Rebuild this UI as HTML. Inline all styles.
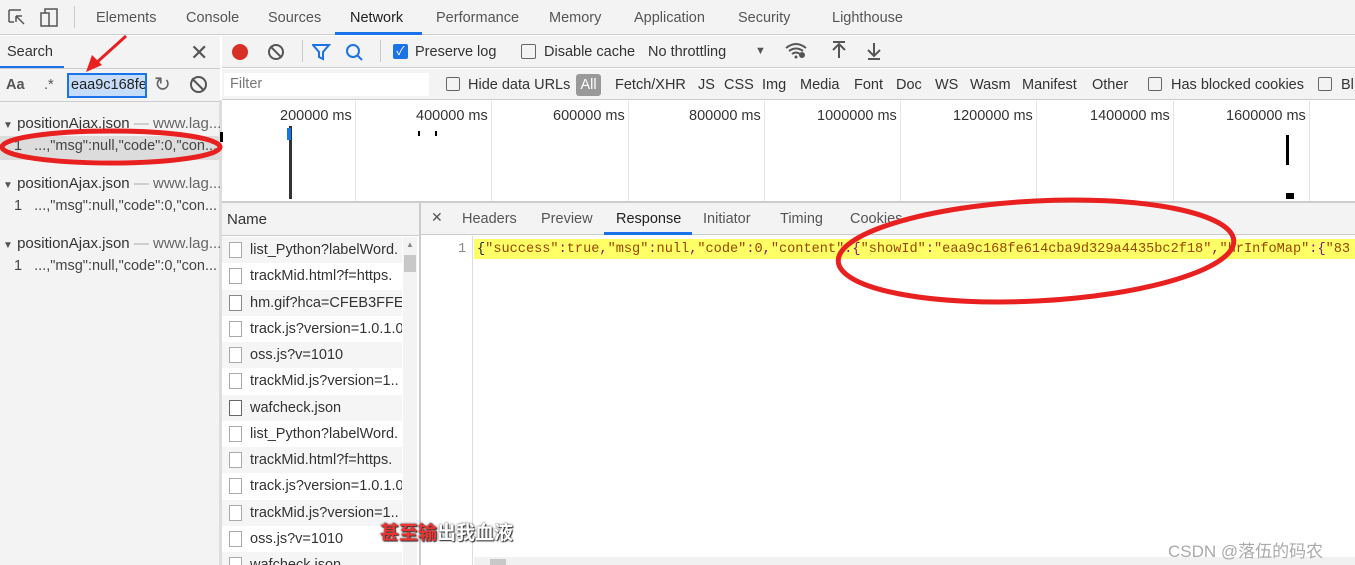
<!DOCTYPE html><html><head><meta charset="utf-8"><style>
*{box-sizing:border-box;margin:0;padding:0}
html,body{width:1355px;height:565px;overflow:hidden}
body{background:#fff;font-family:"Liberation Sans","Noto Sans CJK SC",sans-serif;font-size:14.5px;color:#333;position:relative}
.a{position:absolute;white-space:nowrap}
.f{position:absolute;white-space:nowrap;top:77px;font-size:14.5px}
.mono{font-family:"Liberation Mono",monospace;font-size:13.6px}
.row{position:absolute;left:222px;width:180px;height:26px;line-height:26px;padding-left:28px;white-space:nowrap;overflow:hidden}
.row i{position:absolute;left:7px;top:5px;width:13px;height:16px;border:1px solid #aaa;background:#fff}
</style></head><body>
<div class="a" style="left:0;top:0;width:1355px;height:35px;background:#f3f3f3;border-bottom:1px solid #ccc"></div>
<svg class="a" style="left:7px;top:8px" width="60" height="20"><path d="M2 2h12M2 2v12M2 14h5M9 8l8 8M9 8h6M9 8v6" stroke="#555" stroke-width="1.5" fill="none"/><rect x="34" y="5" width="8" height="13" stroke="#555" fill="none" stroke-width="1.5"/><path d="M38 5V1h12v17h-8" stroke="#555" fill="none" stroke-width="1.5"/></svg>
<div class="a" style="left:74px;top:6px;width:1px;height:22px;background:#ccc"></div>
<div class="a" style="top:10px;left:96px;color:#555">Elements</div>
<div class="a" style="top:10px;left:186px;color:#555">Console</div>
<div class="a" style="top:10px;left:268px;color:#555">Sources</div>
<div class="a" style="top:10px;left:350px;color:#222">Network</div>
<div class="a" style="top:32px;left:335px;width:87px;height:3px;background:#1a73e8"></div>
<div class="a" style="top:10px;left:436px;color:#555">Performance</div>
<div class="a" style="top:10px;left:549px;color:#555">Memory</div>
<div class="a" style="top:10px;left:634px;color:#555">Application</div>
<div class="a" style="top:10px;left:738px;color:#555">Security</div>
<div class="a" style="top:10px;left:832px;color:#555">Lighthouse</div>
<div class="a" style="left:0;top:36px;width:220px;height:66px;background:#f3f3f3;border-bottom:1px solid #ccc"></div>
<div class="a" style="left:7px;top:44px">Search</div>
<div class="a" style="left:0;top:66px;width:64px;height:2px;background:#1a73e8"></div>
<div class="a" style="left:190px;top:40px;font-size:22px;color:#555">✕</div>
<div class="a" style="left:0;top:68px;width:220px;height:1px;background:#ccc"></div>
<div class="a" style="left:6px;top:77px;font-weight:bold;color:#555">Aa</div>
<div class="a" style="left:44px;top:77px;color:#555">.*</div>
<div class="a" style="left:67px;top:73px;width:80px;height:25px;border:2px solid #1a73e8;background:#c6dcf8;padding-left:2px;line-height:20px;color:#222;overflow:hidden">eaa9c168fe</div>
<div class="a" style="left:154px;top:72px;font-size:20px;color:#666">↻</div>
<div class="a" style="left:190px;top:76px;width:17px;height:17px;border:2px solid #555;border-radius:50%"><div style="position:absolute;left:5px;top:-2px;width:2px;height:17px;background:#555;transform:rotate(-45deg)"></div></div>
<div class="a" style="left:0;top:102px;width:220px;height:463px;background:#f3f3f3"></div>
<div class="a" style="left:219px;top:100px;width:3px;height:465px;background:#ddd"></div>
<div class="a" style="left:0;top:136px;width:220px;height:24px;background:#dcdcdc"></div>
<div class="a" style="left:3px;top:115px;font-size:15px"><span style="font-size:10px;color:#555">▼</span> positionAjax.json <span style="color:#aaa">—</span> <span style="color:#666">www.lag...</span></div>
<div class="a" style="left:14px;top:138px;color:#444">1 &nbsp;&nbsp;...,"msg":null,"code":0,"con...</div>
<div class="a" style="left:3px;top:175px;font-size:15px"><span style="font-size:10px;color:#555">▼</span> positionAjax.json <span style="color:#aaa">—</span> <span style="color:#666">www.lag...</span></div>
<div class="a" style="left:14px;top:198px;color:#444">1 &nbsp;&nbsp;...,"msg":null,"code":0,"con...</div>
<div class="a" style="left:3px;top:235px;font-size:15px"><span style="font-size:10px;color:#555">▼</span> positionAjax.json <span style="color:#aaa">—</span> <span style="color:#666">www.lag...</span></div>
<div class="a" style="left:14px;top:258px;color:#444">1 &nbsp;&nbsp;...,"msg":null,"code":0,"con...</div>
<div class="a" style="left:222px;top:36px;width:1133px;height:32px;background:#f3f3f3;border-bottom:1px solid #ccc"></div>
<div class="a" style="left:232px;top:44px;width:16px;height:16px;border-radius:50%;background:#d93025"></div>
<div class="a" style="left:268px;top:44px;width:16px;height:16px;border:2px solid #555;border-radius:50%"><div style="position:absolute;left:5px;top:-2px;width:2px;height:16px;background:#555;transform:rotate(-45deg)"></div></div>
<div class="a" style="left:302px;top:40px;width:1px;height:22px;background:#ccc"></div>
<svg class="a" style="left:312px;top:43px" width="60" height="20"><path d="M1 2h16l-6 7v7l-4-2V9z" fill="none" stroke="#1a73e8" stroke-width="2"/><circle cx="41" cy="8" r="6" fill="none" stroke="#1a73e8" stroke-width="2"/><path d="M45 12l5 5" stroke="#1a73e8" stroke-width="2"/></svg>
<div class="a" style="left:380px;top:40px;width:1px;height:22px;background:#ccc"></div>
<div class="a" style="left:393px;top:44px;width:15px;height:15px;background:#1a73e8;border-radius:2px;color:#fff;font-size:12px;line-height:15px;text-align:center">✓</div>
<div class="a" style="left:415px;top:44px">Preserve log</div>
<div class="a" style="left:521px;top:44px;width:15px;height:15px;border:1px solid #666;border-radius:2px"></div>
<div class="a" style="left:544px;top:44px">Disable cache</div>
<div class="a" style="left:648px;top:44px">No throttling</div>
<div class="a" style="left:755px;top:45px;font-size:11px;color:#555">▼</div>
<svg class="a" style="left:784px;top:41px" width="110" height="20"><path d="M2 7q10-8 20 0M5 10q7-5 14 0M8 13q4-3 8 0" stroke="#555" stroke-width="2" fill="none"/><circle cx="12" cy="16" r="1.5" fill="#555"/><circle cx="18" cy="14" r="3" fill="#555"/><path d="M55 3v14M49 9l6-6 6 6M49 1h12" stroke="#555" stroke-width="2" fill="none"/><path d="M90 2v13M84 9l6 6 6-6M84 18h12" stroke="#555" stroke-width="2" fill="none"/></svg>
<div class="a" style="left:222px;top:69px;width:1133px;height:31px;background:#f3f3f3;border-bottom:1px solid #ccc"></div>
<div class="a" style="left:224px;top:73px;width:205px;height:23px;background:#fff;padding:3px 6px;color:#777">Filter</div>
<div class="a" style="left:446px;top:77px;width:14px;height:14px;border:1px solid #666;border-radius:2px"></div>
<div class="f" style="left:468px">Hide data URLs</div>
<div class="a" style="left:576px;top:74px;width:25px;height:22px;background:#999;color:#fff;border-radius:3px;text-align:center;line-height:22px">All</div>
<div class="f" style="left:615px">Fetch/XHR</div>
<div class="f" style="left:698px">JS</div>
<div class="f" style="left:724px">CSS</div>
<div class="f" style="left:762px">Img</div>
<div class="f" style="left:800px">Media</div>
<div class="f" style="left:854px">Font</div>
<div class="f" style="left:896px">Doc</div>
<div class="f" style="left:935px">WS</div>
<div class="f" style="left:970px">Wasm</div>
<div class="f" style="left:1022px">Manifest</div>
<div class="f" style="left:1092px">Other</div>
<div class="a" style="left:1148px;top:77px;width:14px;height:14px;border:1px solid #666;border-radius:2px"></div>
<div class="f" style="left:1171px">Has blocked cookies</div>
<div class="a" style="left:1318px;top:77px;width:14px;height:14px;border:1px solid #666;border-radius:2px"></div>
<div class="f" style="left:1341px">Bl</div>
<div class="a" style="left:222px;top:101px;width:1133px;height:101px;background:#fff"></div>
<div class="a" style="left:280px;top:108px">200000 ms</div>
<div class="a" style="left:416px;top:108px">400000 ms</div>
<div class="a" style="left:553px;top:108px">600000 ms</div>
<div class="a" style="left:689px;top:108px">800000 ms</div>
<div class="a" style="left:817px;top:108px">1000000 ms</div>
<div class="a" style="left:953px;top:108px">1200000 ms</div>
<div class="a" style="left:1090px;top:108px">1400000 ms</div>
<div class="a" style="left:1226px;top:108px">1600000 ms</div>
<div class="a" style="left:355px;top:101px;width:1px;height:100px;background:#e5e5e5"></div>
<div class="a" style="left:491px;top:101px;width:1px;height:100px;background:#e5e5e5"></div>
<div class="a" style="left:628px;top:101px;width:1px;height:100px;background:#e5e5e5"></div>
<div class="a" style="left:764px;top:101px;width:1px;height:100px;background:#e5e5e5"></div>
<div class="a" style="left:900px;top:101px;width:1px;height:100px;background:#e5e5e5"></div>
<div class="a" style="left:1036px;top:101px;width:1px;height:100px;background:#e5e5e5"></div>
<div class="a" style="left:1173px;top:101px;width:1px;height:100px;background:#e5e5e5"></div>
<div class="a" style="left:1309px;top:101px;width:1px;height:100px;background:#e5e5e5"></div>
<div class="a" style="left:289px;top:126px;width:3px;height:73px;background:#333"></div>
<div class="a" style="left:287px;top:128px;width:4px;height:12px;background:#1a73e8"></div>
<div class="a" style="left:418px;top:131px;width:2px;height:5px;background:#000"></div>
<div class="a" style="left:435px;top:131px;width:2px;height:5px;background:#000"></div>
<div class="a" style="left:1286px;top:135px;width:3px;height:30px;background:#000"></div>
<div class="a" style="left:1286px;top:193px;width:8px;height:6px;background:#000"></div>
<div class="a" style="left:220px;top:132px;width:3px;height:10px;background:#000"></div>
<div class="a" style="left:222px;top:201px;width:1133px;height:2px;background:#ccc"></div>
<div class="a" style="left:222px;top:203px;width:197px;height:33px;background:#f3f3f3;border-bottom:1px solid #ccc;padding:8px 5px;font-size:15px">Name</div>
<div class="a" style="left:419px;top:203px;width:2px;height:362px;background:#ccc"></div>
<div class="row" style="top:237px;background:#f5f5f5"><i></i>list_Python?labelWord.</div>
<div class="row" style="top:263px"><i></i>trackMid.html?f=https.</div>
<div class="row" style="top:290px;background:#f5f5f5"><i style="border-color:#888"></i>hm.gif?hca=CFEB3FFE..</div>
<div class="row" style="top:316px"><i></i>track.js?version=1.0.1.0</div>
<div class="row" style="top:342px;background:#f5f5f5"><i></i>oss.js?v=1010</div>
<div class="row" style="top:368px"><i></i>trackMid.js?version=1..</div>
<div class="row" style="top:395px;background:#f5f5f5"><i style="border-color:#666"></i>wafcheck.json</div>
<div class="row" style="top:421px"><i></i>list_Python?labelWord.</div>
<div class="row" style="top:447px;background:#f5f5f5"><i></i>trackMid.html?f=https.</div>
<div class="row" style="top:473px"><i></i>track.js?version=1.0.1.0</div>
<div class="row" style="top:500px;background:#f5f5f5"><i></i>trackMid.js?version=1..</div>
<div class="row" style="top:526px"><i></i>oss.js?v=1010</div>
<div class="row" style="top:552px;height:13px;background:#f5f5f5"><i></i>wafcheck.json</div>
<div class="a" style="left:403px;top:237px;width:14px;height:328px;background:#f3f3f3"></div>
<div class="a" style="left:404px;top:255px;width:12px;height:17px;background:#c8c8c8"></div>
<div class="a" style="left:406px;top:240px;font-size:8px;color:#888">▲</div>
<div class="a" style="left:421px;top:203px;width:934px;height:32px;background:#f3f3f3;border-bottom:1px solid #ccc"></div>
<div class="a" style="left:431px;top:209px;font-size:14px;color:#555">✕</div>
<div class="a" style="left:462px;top:211px;color:#555">Headers</div>
<div class="a" style="left:541px;top:211px;color:#555">Preview</div>
<div class="a" style="left:616px;top:211px;color:#222">Response</div>
<div class="a" style="left:604px;top:232px;width:88px;height:3px;background:#1a73e8"></div>
<div class="a" style="left:703px;top:211px;color:#555">Initiator</div>
<div class="a" style="left:780px;top:211px;color:#555">Timing</div>
<div class="a" style="left:850px;top:211px;color:#555">Cookies</div>
<div class="a" style="left:472px;top:236px;width:1px;height:329px;background:#ddd"></div>
<div class="a mono" style="left:458px;top:242px;color:#888">1</div>
<div class="a" style="left:474px;top:239px;width:881px;height:20px;background:#ffff66"></div>
<div class="a mono" style="left:477px;top:242px;color:#881280"><span style="color:#222">{</span><span style="color:#994500">"success"</span>:<span style="color:#994500">true</span>,<span style="color:#994500">"msg"</span>:<span style="color:#994500">null</span>,<span style="color:#994500">"code"</span>:<span style="color:#994500">0</span>,<span style="color:#994500">"content"</span>:{<span style="color:#994500">"showId"</span>:<span style="color:#994500">"eaa9c168fe614cba9d329a4435bc2f18"</span>,<span style="color:#994500">"hrInfoMap"</span>:{<span style="color:#994500">"83</span></div>
<div class="a" style="left:474px;top:557px;width:881px;height:8px;background:#f1f1f1"></div>
<div class="a" style="left:490px;top:559px;width:16px;height:6px;background:#c8c8c8"></div>
<div class="a" style="left:380px;top:518px;font-size:19px;font-weight:bold;color:#fff;text-shadow:0 0 2px #333,1px 1px 1px #333"><span style="color:#e33">甚至输</span>出我血液</div>
<div class="a" style="left:1168px;top:537px;font-size:17px;color:#aaa">CSDN @落伍的码农</div>
<svg class="a" style="left:0;top:0" width="1355" height="565">
<ellipse cx="111" cy="147" rx="109" ry="16" fill="none" stroke="#e82020" stroke-width="5"/>
<ellipse cx="1036" cy="251" rx="198" ry="50" fill="none" stroke="#e82020" stroke-width="5" transform="rotate(-3 1036 251)"/>
<path d="M126 36L95 64" stroke="#e82020" stroke-width="3"/><path d="M86 72l6-17 10 10z" fill="#e82020"/>
</svg>
</body></html>
